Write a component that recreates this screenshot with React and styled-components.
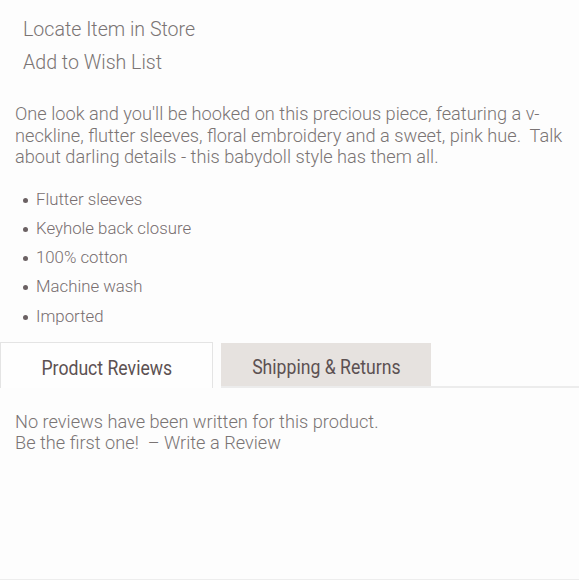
import React from 'react';
import styled, { createGlobalStyle } from 'styled-components';

const GlobalStyle = createGlobalStyle`
  html, body {
    margin: 0;
    padding: 0;
    background: #fdfdfd;
  }
  body {
    font-family: 'Roboto', 'Liberation Sans', sans-serif;
  }
`;

const features = ['Flutter sleeves', 'Keyhole back closure', '100% cotton', 'Machine wash', 'Imported'];

export default function App() {
  return (
    <Page>
      <GlobalStyle />
      <Actions>
        <ActionLink>Locate Item in Store</ActionLink>
        <ActionLink>Add to Wish List</ActionLink>
      </Actions>
      <Description>
        One look and you'll be hooked on this precious piece, featuring a v-neckline, flutter sleeves, floral
        embroidery and a sweet, pink hue.&nbsp; Talk about darling details - this babydoll style has them all.
      </Description>
      <FeatureList>
        {features.map((f) => (
          <Feature key={f}>{f}</Feature>
        ))}
      </FeatureList>
      <TabBar>
        <Tab $active>
          <TabLabel>Product Reviews</TabLabel>
        </Tab>
        <Tab>
          <TabLabel>Shipping &amp; Returns</TabLabel>
        </Tab>
        <TabFiller />
      </TabBar>
      <ReviewText>
        No reviews have been written for this product.
        <br />
        Be the first one!&nbsp; – Write a Review
      </ReviewText>
    </Page>
  );
}

const Page = styled.div`
  width: 579px;
  height: 579px;
  border-bottom: 1px solid #ededed;
  background: #fdfdfd;
  color: #787070;
  font-weight: 300;
  overflow: hidden;
`;

const Actions = styled.div`
  display: flex;
  flex-direction: column;
  gap: 9px;
  padding: 18px 0 0 23px;
`;

const ActionLink = styled.div`
  font-size: 19.6px;
  line-height: 24px;
  color: #7a7474;
`;

const Description = styled.p`
  margin: 28px 0 0;
  padding: 0 15px;
  font-size: 18.2px;
  line-height: 21.5px;
  color: #7a7474;
`;

const FeatureList = styled.ul`
  margin: 17px 0 0;
  padding: 0 0 0 36px;
  list-style: none;
`;

const Feature = styled.li`
  position: relative;
  font-size: 16.8px;
  line-height: 29.25px;
  color: #776d6f;

  &::before {
    content: '';
    position: absolute;
    left: -13px;
    top: 13px;
    width: 5px;
    height: 5px;
    border-radius: 50%;
    background: #6b6163;
  }
`;

const TabBar = styled.div`
  display: flex;
  align-items: flex-end;
  gap: 8px;
  margin-top: 11px;
  height: 46px;
`;

const Tab = styled.div`
  display: flex;
  align-items: center;
  justify-content: center;
  box-sizing: border-box;
  height: ${(p) => (p.$active ? '46px' : '45px')};
  width: ${(p) => (p.$active ? '213px' : '210px')};
  background: ${(p) => (p.$active ? '#fefefe' : '#e6e2df')};
  border: ${(p) => (p.$active ? '1px solid #e4e4e4' : 'none')};
  border-bottom: ${(p) => (p.$active ? 'none' : '2px solid #ececec')};
  padding-top: ${(p) => (p.$active ? '6px' : '5px')};
`;

const TabLabel = styled.span`
  display: inline-block;
  font-size: 21px;
  font-weight: 400;
  color: #5c5152;
  transform: scaleX(0.84);
  white-space: nowrap;
`;

const TabFiller = styled.div`
  flex: 1;
  align-self: flex-end;
  height: 2px;
  background: #ececec;
  margin-left: -8px;
`;

const ReviewText = styled.p`
  margin: 23px 0 0;
  padding: 0 15px;
  font-size: 18.2px;
  line-height: 21px;
  color: #7a7474;
`;
